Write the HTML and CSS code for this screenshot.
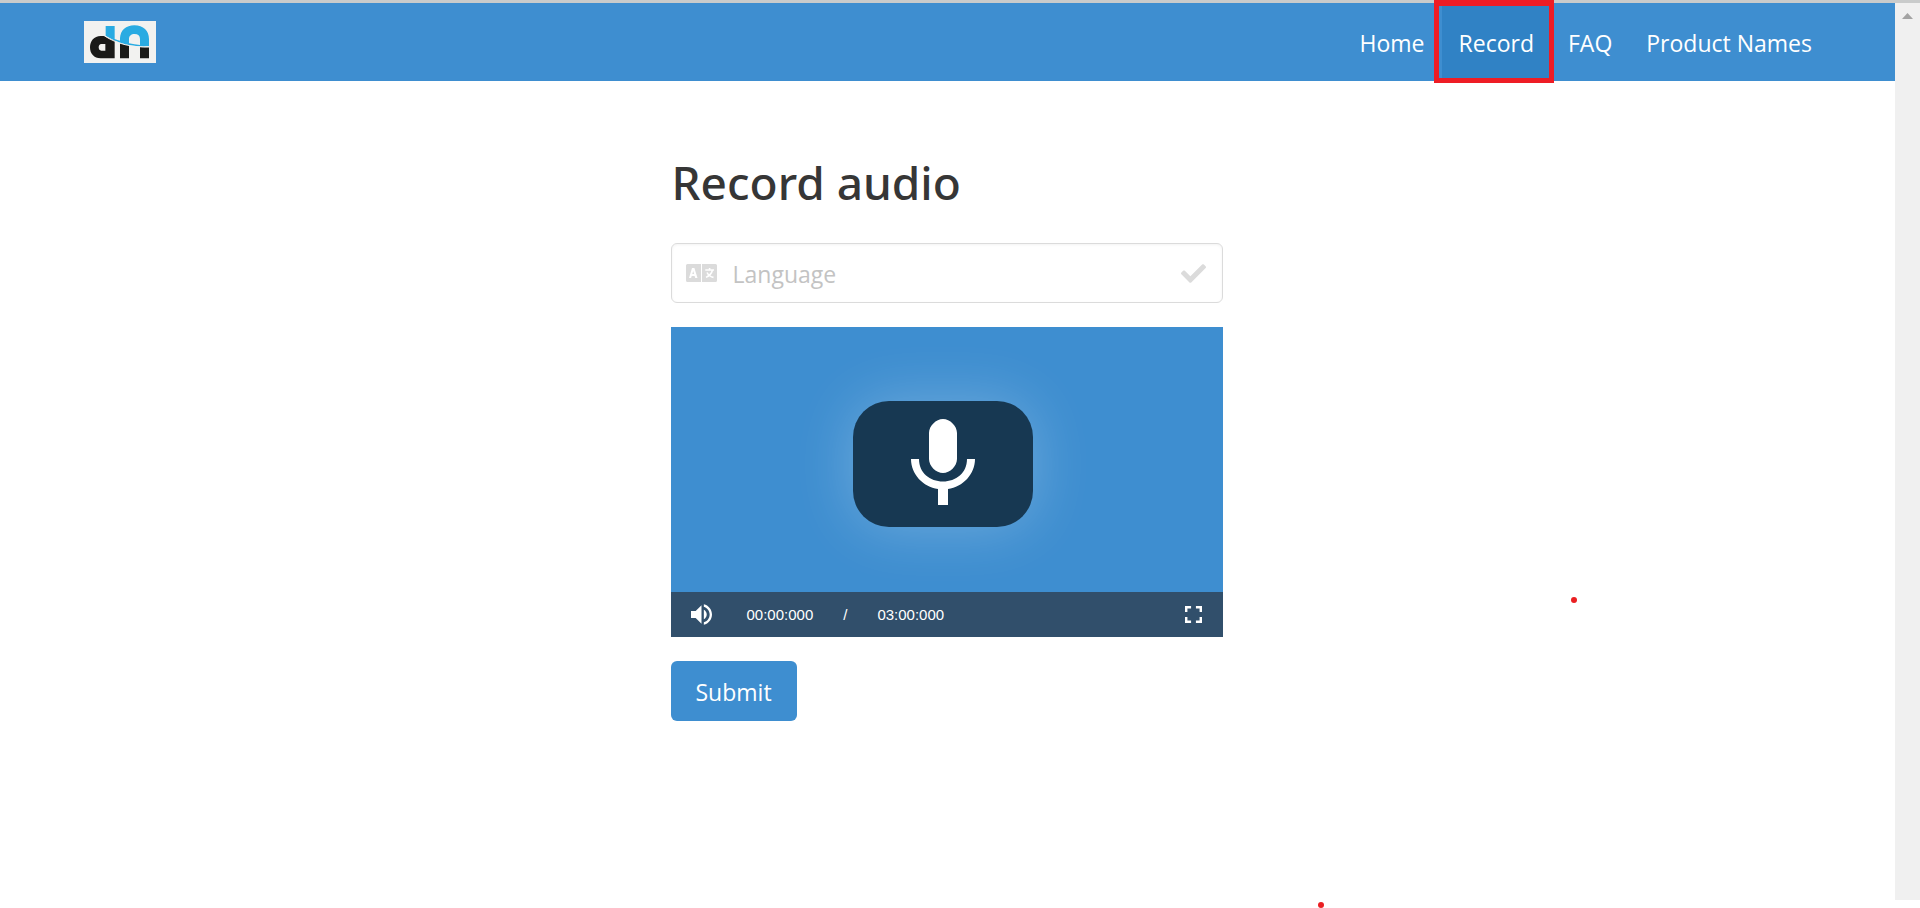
FILE: index.html
```html
<!DOCTYPE html>
<html lang="en">
<head>
<meta charset="utf-8">
<title>Record audio</title>
<link rel="stylesheet" href="styles.css">
</head>
<body>
<div class="window">
  <div class="page">
    <header class="navbar">
      <a class="brand" href="#" aria-label="Home page">
        <svg class="logo" viewBox="0 0 216 126" aria-hidden="true">
          <rect width="216" height="126" fill="#f2f2f0"/>
          <path fill="#1a1a18" fill-rule="evenodd" d="M65 47C73 52 82 56 92 59V112H50C30 112 18 98 18 79C18 60 30 45 50 45C56 45 61 45 65 47ZM52 69C47 69 44 73 44 79C44 85 47 89 52 89H64V69Z"/>
          <path fill="#1a1a18" d="M108 66Q121 71 135 73V112H108ZM168 78Q182 79 195 79V112H168Z"/>
          <path fill="#29abe2" d="M65 15H92V54Q100 57 108 59V52C109 28 126 13 151 13C178 13 195 29 195 54V73Q181 74 168 72V54C168 44 162 39 152 39C141 39 135 45 135 54V67Q151 71 168 72L195 73V76C145 79 99 66 65 44Z"/>
          <path fill="none" stroke="#f2f2f0" stroke-width="3" d="M62 45C99 69 145 80 197 77.500"/>
        </svg>
      </a>
      <nav class="menu">
        <a class="item" href="#">Home</a>
        <a class="item active" href="#" aria-current="page">Record</a>
        <a class="item" href="#">FAQ</a>
        <a class="item" href="#">Product Names</a>
      </nav>
    </header>
    <main class="content">
      <form class="form">
        <h1 class="title">Record audio</h1>
        <div class="field">
          <svg class="icon-language" viewBox="0 0 31 18" aria-hidden="true">
            <path fill="#dbdbdb" d="M1.500 0H15V18H1.500Q0 18 0 16.500V1.500Q0 0 1.500 0ZM16 0H29.500Q31 0 31 1.500V16.500Q31 18 29.500 18H16Z"/>
            <path fill="#fff" fill-rule="evenodd" d="M6 4H8.400L11.500 14H9.200L8.600 12H5.700L5.100 14H3ZM6.300 10H8.100L7.200 7Z"/>
            <path fill="none" stroke="#fff" stroke-width="1.600" d="M19.300 6H28M23.600 4V6M26.300 6.500C25.500 10 23 12 20 13.400M21 8.500C22.300 11 25 13 27.500 13.400"/>
          </svg>
          <input class="input" type="text" placeholder="Language" aria-label="Language">
          <svg class="icon-check" viewBox="0 0 512 512" aria-hidden="true">
            <path fill="#dbdbdb" d="M173.900 439.400l-166.400-166.400c-10-10-10-26.200 0-36.200l36.200-36.200c10-10 26.200-10 36.200 0L192 312.700 432.100 72.600c10-10 26.200-10 36.200 0l36.200 36.200c10 10 10 26.200 0 36.200l-294.400 294.400c-10 10-26.200 10-36.200 0z"/>
          </svg>
        </div>
        <div class="recorder">
          <div class="stage">
            <button class="mic" type="button" aria-label="Start recording">
              <svg class="mic-icon" viewBox="0 0 64 86" aria-hidden="true">
                <path fill="#fff" d="M32 0C39 0 46 7 46 14V40C46 47 39 54 32 54C25 54 18 47 18 40V14C18 7 25 0 32 0ZM0 40H8C8 54 19 62.500 32 62.500S56 54 56 40H64C64 55 52 68 37 70V86H27V70C12 68 0 55 0 40Z"/>
              </svg>
            </button>
          </div>
          <div class="controls">
            <button class="control" type="button" aria-label="Mute">
              <svg class="icon-volume" viewBox="3 3 18 18" aria-hidden="true">
                <path fill="#fff" d="M3 9v6h4l5 5V4L7 9H3zm13.500 3c0-1.770-1.020-3.290-2.500-4.030v8.050c1.480-.73 2.500-2.250 2.500-4.020zM14 3.230v2.060c2.890.86 5 3.540 5 6.710s-2.110 5.850-5 6.710v2.060c4.010-.91 7-4.490 7-8.770s-2.990-7.860-7-8.770z"/>
              </svg>
            </button>
            <div class="time"><span>00:00:000</span><span>/</span><span>03:00:000</span></div>
            <button class="control" type="button" aria-label="Fullscreen">
              <svg class="icon-full" viewBox="5 5 14 14" aria-hidden="true">
                <path fill="#fff" d="M7 14H5v5h5v-2H7v-3zm-2-4h2V7h3V5H5v5zm12 7h-3v2h5v-5h-2v3zM14 5v2h3v3h2V5h-5z"/>
              </svg>
            </button>
          </div>
        </div>
        <button class="submit" type="button">Submit</button>
      </form>
    </main>
  </div>
  <div class="scrollbar"><span class="arrow"></span></div>
  <span class="dot dot-upper"></span>
  <span class="dot dot-lower"></span>
</div>
</body>
</html>
```
FILE: styles.css
```css
* { box-sizing: border-box; }

body {
  margin: 0;
  padding-top: 3px;
  background: linear-gradient(#c9cbcb 3px, #fff 3px);
  color: #363636;
  font-family: "Open Sans", "Noto Sans", sans-serif;
  font-size: 23px;
}

button, input { font: inherit; }

.window {
  position: relative;
  display: flex;
  height: calc(100vh - 3px);
  padding-bottom: 8px;
}

.page { flex: 1; }

.navbar {
  display: flex;
  justify-content: space-between;
  height: 78px;
  padding: 0 66px;
  background: #3e8ed0;
}

.brand {
  display: flex;
  align-items: center;
  padding: 0 18px;
}

.logo {
  width: 72px;
  height: 42px;
}

.menu { display: flex; }

.item {
  position: relative;
  display: flex;
  align-items: center;
  padding: 2px 17px 0;
  color: #fff;
  text-decoration: none;
}

.active { background: #3082c5; }

.active::after {
  content: "";
  position: absolute;
  z-index: 1;
  inset: -3px -3px -2px -8px;
  border: 5px solid #ee1c25;
  border-top-width: 6px;
}

.content {
  display: flex;
  justify-content: center;
  padding: 72px 26px 72px 24px;
}

.form {
  display: flex;
  flex-direction: column;
  align-items: flex-start;
  gap: 24px;
  width: 100%;
  max-width: 552px;
}

.title {
  margin: 0 0 10px;
  padding: 2px 0 0 1px;
  font-family: "Noto Sans", "Open Sans", sans-serif;
  font-size: 46px;
  font-weight: 500;
  line-height: 54px;
}

.field {
  display: flex;
  align-items: center;
  gap: 16px;
  width: 100%;
  height: 60px;
  padding: 0 16px 0 14px;
  border: 1px solid #dbdbdb;
  border-radius: 6px;
  box-shadow: inset 0 1px 3px rgba(10, 10, 10, 0.05);
}

.icon-language {
  width: 31px;
  height: 18px;
}

.input {
  flex: 1;
  min-width: 0;
  padding: 2px 0 0;
  border: 0;
  outline: 0;
  background: none;
  color: #363636;
}

.input::placeholder { color: #c3c3c3; opacity: 1; }

.icon-check {
  width: 25px;
  height: 25px;
}

.recorder {
  width: 100%;
  background: #3e8ed0;
}

.stage {
  display: flex;
  justify-content: center;
  padding: 74px 8px 65px 0;
}

.mic {
  display: flex;
  justify-content: center;
  width: 180px;
  height: 126px;
  padding: 18px 0;
  border: 0;
  border-radius: 36px;
  background: #173852;
  box-shadow: 0 0 60px rgba(255, 255, 255, 0.25);
}

.mic-icon {
  width: 64px;
  height: 86px;
}

.controls {
  display: flex;
  align-items: center;
  height: 45px;
  padding: 0 21px 0 20px;
  background: #314f6b;
  color: #fff;
  font-family: "Liberation Sans", Arial, sans-serif;
  font-size: 15px;
}

.control {
  display: flex;
  padding: 0;
  border: 0;
  background: none;
}

.icon-volume {
  width: 21px;
  height: 21px;
}

.icon-full {
  width: 17px;
  height: 17px;
}

.time {
  display: flex;
  flex: 1;
  gap: 30px;
  padding-left: 35px;
}

.submit {
  height: 60px;
  padding: 2px 25px 0;
  border: 0;
  border-radius: 6px;
  background: #3e8ed0;
  color: #fff;
}

.scrollbar {
  display: flex;
  justify-content: center;
  width: 25px;
  padding-top: 10px;
  background: #f0f0f0;
}

.arrow {
  width: 11px;
  height: 6px;
  background: #a3a3a3;
  clip-path: polygon(50% 0, 100% 100%, 0 100%);
}

.dot {
  position: absolute;
  width: 6px;
  height: 6px;
  border-radius: 50%;
  background: #ea1f22;
}

.dot-upper { left: 1571px; top: 594px; }
.dot-lower { left: 1318px; top: 899px; }
```
